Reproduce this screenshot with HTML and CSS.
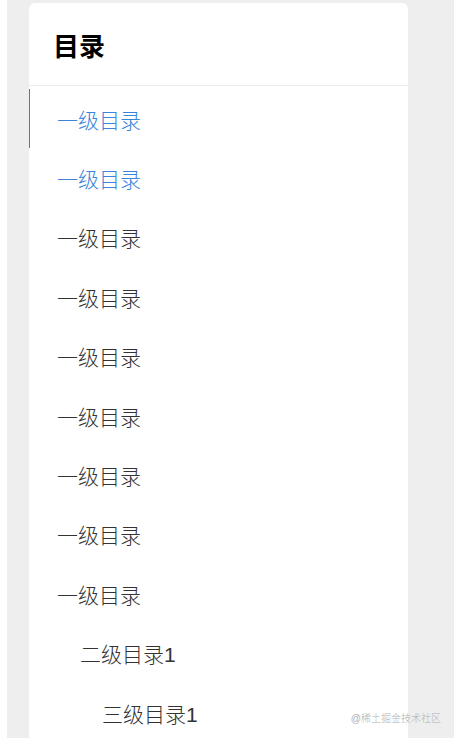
FILE: index.html
```html
<!DOCTYPE html>
<html lang="zh-CN">
<head>
    <meta charset="UTF-8">
    <meta name="viewport" content="width=device-width, initial-scale=1.0">
    <title>目录</title>
    <link rel="stylesheet" href="styles.css">
</head>
<body>
    <div class="page">
        <div class="toc">
            <div class="toc-header">
                <h2>目录</h2>
            </div>
            <ul class="toc-list">
                <li class="toc-item level-1 active">一级目录</li>
                <li class="toc-item level-1 highlight">一级目录</li>
                <li class="toc-item level-1">一级目录</li>
                <li class="toc-item level-1">一级目录</li>
                <li class="toc-item level-1">一级目录</li>
                <li class="toc-item level-1">一级目录</li>
                <li class="toc-item level-1">一级目录</li>
                <li class="toc-item level-1">一级目录</li>
                <li class="toc-item level-1">一级目录</li>
                <li class="toc-item level-2">二级目录1</li>
                <li class="toc-item level-3">三级目录1</li>
            </ul>
        </div>
    </div>
    <div class="watermark">@稀土掘金技术社区</div>
</body>
</html>
```

FILE: styles.css
```css
body {
    font-family: "Liberation Sans", "Noto Sans CJK SC", sans-serif;
    margin: 0;
    padding: 0;
    background: #fff;
    height: 738px;
    overflow: hidden;
}

.page {
    margin-left: 7px;
    padding: 3px 46px 0 22px;
    background: #eeeeee;
    height: 100%;
    box-sizing: border-box;
}

.toc {
    background: #fff;
    border-radius: 6px 6px 0 0;
    height: 100%;
}

.toc-header {
    height: 82px;
    padding-left: 24px;
    display: flex;
    align-items: center;
    border-bottom: 1px solid #ebebeb;
}

h2 {
    margin: 0;
    font-size: 26px;
    font-weight: bold;
    color: #000;
}

.toc-list {
    list-style: none;
    margin: 0;
    padding: 3px 0 0;
}

.toc-item {
    height: 59.4px;
    display: flex;
    align-items: center;
    font-size: 21px;
    font-weight: 300;
    color: #333;
    border-left: 1px solid transparent;
}

.level-1 {
    padding-left: 27px;
}

.level-2 {
    padding-left: 50px;
}

.level-3 {
    padding-left: 72px;
}

.toc-item.active,
.toc-item.highlight {
    color: #3a84dc;
}

.toc-item.active {
    border-left-color: #2f7fe0;
}

.watermark {
    position: absolute;
    right: 13px;
    bottom: 13px;
    font-size: 10px;
    font-weight: 300;
    color: #b0b0b0;
}
```
